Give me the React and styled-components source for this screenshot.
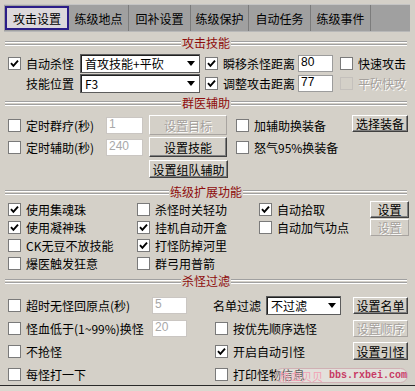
import React from "react";
import styled, { createGlobalStyle } from "styled-components";

const GlobalStyle = createGlobalStyle`
  html, body {
    margin: 0;
    padding: 0;
    background: #d4d0c8;
  }
  body {
    font-family: "Noto Sans CJK SC", "Noto Sans", sans-serif;
    font-size: 12px;
    color: #000;
  }
`;

const Window = styled.div`
  position: relative;
  width: 415px;
  height: 391px;
  box-sizing: border-box;
  padding-top: 4px;
  display: flex;
  flex-direction: column;
  overflow: hidden;
`;

const TabBar = styled.div`
  display: flex;
  height: 28px;
  margin: 0 5px 0 4px;
  background: #a0a0a0;
  border-top: 1px solid #c4c4c4;
  border-bottom: 1px solid #b8b8b8;
  box-sizing: border-box;
`;

const Tab = styled.div`
  width: ${(p) => p.$w}px;
  display: flex;
  align-items: center;
  justify-content: center;
  box-sizing: border-box;
  white-space: nowrap;
  border-right: 1px solid #7c7c7c;
  ${(p) =>
    p.$active &&
    `
    margin: 1px 0 1px 1px;
    background: #dcd8dc;
    border: 2px solid #2b1d88;
  `}
`;

const Header = styled.div`
  display: flex;
  align-items: center;
  height: 16px;
  margin: ${(p) => p.$mt}px 8px 0 5px;
  gap: 1px;
`;

const Rule = styled.div`
  flex: 1;
  height: 5px;
  background: linear-gradient(
    to bottom,
    #a0a0a0 0 1px,
    #fff 1px 2px,
    transparent 2px 3px,
    #a0a0a0 3px 4px,
    #fff 4px 5px
  );
`;

const Title = styled.span`
  color: #8e0c0c;
  line-height: 16px;
  white-space: nowrap;
`;

const Section = styled.div`
  display: grid;
  grid-template-columns: ${(p) => p.$cols};
  grid-auto-rows: ${(p) => p.$row}px;
  row-gap: ${(p) => p.$gap || 0}px;
  align-items: center;
  margin-top: ${(p) => p.$mt}px;
  padding-left: 8px;
`;

const CheckLabel = styled.div`
  display: inline-flex;
  align-items: center;
  gap: 5px;
  white-space: nowrap;
  margin-left: ${(p) => p.$ml || 0}px;
  color: ${(p) => (p.$disabled ? "#a4a09c" : "#000")};
  text-shadow: ${(p) => (p.$disabled ? "1px 1px 0 #fff" : "none")};
`;

const Box = styled.span`
  flex: none;
  width: 13px;
  height: 13px;
  box-sizing: border-box;
  display: flex;
  align-items: center;
  justify-content: center;
  border: 1px solid ${(p) => (p.$disabled ? "#c4c0bc" : "#7a7a7a")};
  background: ${(p) => (p.$disabled ? "transparent" : "#fff")};
`;

const Text = styled.span`
  white-space: nowrap;
  padding-left: ${(p) => p.$pl || 0}px;
  display: inline-flex;
  align-items: center;
  gap: 5px;
`;

const Field = styled.div`
  width: ${(p) => p.$w}px;
  height: 17px;
  box-sizing: border-box;
  background: #fff;
  border: 1px solid ${(p) => (p.$disabled ? "#cac6c2" : "#9c9c9c")};
  font-family: "Liberation Sans", sans-serif;
  font-size: 12px;
  line-height: 12px;
  padding: 0 2px;
  color: ${(p) => (p.$disabled ? "#a8a8a8" : "#000")};
`;

const Combo = styled.div`
  width: ${(p) => p.$w}px;
  height: 19px;
  box-sizing: border-box;
  display: flex;
  align-items: center;
  justify-content: space-between;
  padding: 0 4px 0 4px;
  background: #fff;
  border: 1px solid #5c5c5c;
  box-shadow: inset 1px 1px 0 #202020;
  white-space: nowrap;
`;

const Arrow = styled.span`
  width: 0;
  height: 0;
  border-left: 4.5px solid transparent;
  border-right: 4.5px solid transparent;
  border-top: 5px solid #000;
`;

const Btn = styled.div`
  width: ${(p) => p.$w}px;
  height: ${(p) => p.$h || 17}px;
  align-self: ${(p) => (p.$top ? "start" : "center")};
  box-sizing: border-box;
  display: flex;
  align-items: center;
  justify-content: center;
  background: #d4d0c8;
  white-space: nowrap;
  border: 1px solid;
  border-color: ${(p) =>
    p.$disabled ? "#fff #a8a4a0 #a8a4a0 #fff" : "#fff #404040 #404040 #fff"};
  box-shadow: ${(p) => (p.$disabled ? "none" : "inset -1px -1px 0 #808080")};
  color: ${(p) => (p.$disabled ? "#a4a09c" : "#000")};
  text-shadow: ${(p) => (p.$disabled ? "1px 1px 0 #fff" : "none")};
`;

const BottomEdge = styled.div`
  margin-top: auto;
  height: 5px;
  border-top: 1px solid #2a2a2a;
  background: #dcd8d0;
`;

const Watermark = styled.div`
  position: absolute;
  left: 275px;
  top: 368px;
  width: 133px;
  height: 15px;
  box-sizing: border-box;
  border: 1px solid #d0b0b4;
  border-radius: 8px;
  background: rgba(255, 255, 255, 0.35);
  display: flex;
  align-items: center;
  padding-left: 3px;
  gap: 6px;
  white-space: nowrap;
`;

const MarkCn = styled.span`
  color: #f2a0b4;
  font-size: 11px;
  letter-spacing: 0;
`;

const MarkUrl = styled.span`
  color: #c73a64;
  font-family: "Liberation Mono", monospace;
  font-weight: bold;
  font-size: 10px;
`;

const Tick = () => (
  <svg width="9" height="9" viewBox="0 0 9 9">
    <path d="M1 4.2 L3.4 6.8 L8 1.6" fill="none" stroke="#000" strokeWidth="1.9" />
  </svg>
);

const Check = ({ label, checked, disabled, ml }) => (
  <CheckLabel $disabled={disabled} $ml={ml}>
    <Box $disabled={disabled}>{checked && <Tick />}</Box>
    {label}
  </CheckLabel>
);

const SectionHeader = ({ title, mt }) => (
  <Header $mt={mt}>
    <Rule />
    <Title>{title}</Title>
    <Rule />
  </Header>
);

const tabs = [
  ["攻击设置", 64],
  ["练级地点", 60],
  ["回补设置", 62],
  ["练级保护", 58],
  ["自动任务", 62],
  ["练级事件", 60],
];

export default function App() {
  return (
    <Window>
      <GlobalStyle />
      <TabBar>
        {tabs.map(([name, w], i) => (
          <Tab key={name} $w={w} $active={i === 0}>
            {name}
          </Tab>
        ))}
      </TabBar>

      <SectionHeader title="攻击技能" mt={3} />
      <Section $cols="72px 125px 93px 42px 1fr" $row={19} $gap={1} $mt={3}>
        <Check label="自动杀怪" checked />
        <Combo $w={120}>
          首攻技能+平砍
          <Arrow />
        </Combo>
        <Check label="瞬移杀怪距离" checked />
        <Field $w={35}>80</Field>
        <Check label="快速攻击" />

        <Text $pl={18}>技能位置</Text>
        <Combo $w={120}>
          F3
          <Arrow />
        </Combo>
        <Check label="调整攻击距离" checked />
        <Field $w={35}>77</Field>
        <Check label="平砍快攻" disabled />
      </Section>

      <SectionHeader title="群医辅助" mt={2} />
      <Section $cols="98px 43px 87px 116px 1fr" $row={20} $gap={2} $mt={4}>
        <Check label="定时群疗(秒)" />
        <Field $w={37} $disabled>1</Field>
        <Btn $w={78} $h={20} $disabled>设置目标</Btn>
        <Check label="加辅助换装备" />
        <Btn $w={56} $top>选择装备</Btn>

        <Check label="定时辅助(秒)" />
        <Field $w={37} $disabled>240</Field>
        <Btn $w={78} $h={20}>设置技能</Btn>
        <Check label="怒气95%换装备" />
        <span />

        <span />
        <span />
        <Btn $w={79} $h={18}>设置组队辅助</Btn>
        <span />
        <span />
      </Section>

      <SectionHeader title="练级扩展功能" mt={5} />
      <Section $cols="129px 122px 111px 1fr" $row={18} $mt={0}>
        <Check label="使用集魂珠" checked />
        <Check label="杀怪时关轻功" />
        <Check label="自动拾取" checked />
        <Btn $w={39}>设置</Btn>

        <Check label="使用凝神珠" checked />
        <Check label="挂机自动开盒" checked />
        <Check label="自动加气功点" />
        <Btn $w={39} $disabled>设置</Btn>

        <Check label="CK无豆不放技能" />
        <Check label="打怪防掉河里" checked />
        <span />
        <span />

        <Check label="爆医触发狂意" />
        <Check label="群弓用普箭" />
        <span />
        <span />
      </Section>

      <SectionHeader title="杀怪过滤" mt={1} />
      <Section $cols="144px 61px 140px 1fr" $row={20} $gap={3} $mt={6}>
        <Check label="超时无怪回原点(秒)" />
        <Field $w={35} $disabled>5</Field>
        <Text>
          名单过滤
          <Combo $w={75}>
            不过滤
            <Arrow />
          </Combo>
        </Text>
        <Btn $w={55}>设置名单</Btn>

        <Check label="怪血低于(1~99%)换怪" />
        <Field $w={35} $disabled>20</Field>
        <Check label="按优先顺序选怪" ml={2} />
        <Btn $w={55} $disabled>设置顺序</Btn>

        <Check label="不抢怪" />
        <span />
        <Check label="开启自动引怪" checked ml={2} />
        <Btn $w={55} $h={18}>设置引怪</Btn>

        <Check label="每怪打一下" />
        <span />
        <Check label="打印怪物信息" ml={2} />
        <span />
      </Section>

      <BottomEdge />
      <Watermark>
        <MarkCn>热血贝贝</MarkCn>
        <MarkUrl>bbs.rxbei.com</MarkUrl>
      </Watermark>
    </Window>
  );
}
